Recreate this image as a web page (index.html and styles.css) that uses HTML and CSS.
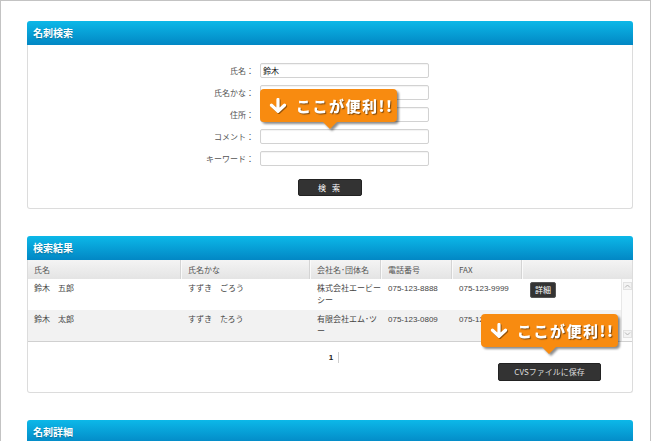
FILE: index.html
```html
<!DOCTYPE html>
<html lang="ja">
<head>
<meta charset="utf-8">
<title>名刺検索</title>
<link rel="stylesheet" href="styles.css">
</head>
<body>
<div class="frame">
  <section class="panel">
    <h2 class="panel-head">名刺検索</h2>
    <div class="panel-body search-body">
      <form class="search-form">
        <label class="field-label">氏名：</label><input class="field" type="text" value="鈴木">
        <label class="field-label">氏名かな：</label><input class="field" type="text">
        <label class="field-label">住所：</label><input class="field" type="text">
        <label class="field-label">コメント：</label><input class="field" type="text">
        <label class="field-label">キーワード：</label><input class="field" type="text">
      </form>
      <button class="btn btn-search" type="button">検 索</button>
    </div>
    <div class="callout callout-search">
      <svg class="callout-icon" viewBox="0 0 18 15" width="18" height="15"><path d="M9 1.5V13M2.5 7.2L9 13.2L15.5 7.2" stroke="#fff" stroke-width="3.2" fill="none" stroke-linecap="round" stroke-linejoin="round"/></svg>
      <span class="callout-text">ここが便利!!</span>
    </div>
  </section>

  <section class="panel">
    <h2 class="panel-head">検索結果</h2>
    <div class="panel-body results-body">
      <div class="thead cols">
        <div class="th">氏名</div>
        <div class="th">氏名かな</div>
        <div class="th">会社名･団体名</div>
        <div class="th">電話番号</div>
        <div class="th">FAX</div>
        <div class="th th-last"></div>
      </div>
      <div class="tbody-wrap">
        <div class="tbody">
          <div class="tr cols">
            <div class="td">鈴木　五郎</div>
            <div class="td">すずき　ごろう</div>
            <div class="td">株式会社エービーシー</div>
            <div class="td">075-123-8888</div>
            <div class="td">075-123-9999</div>
            <div class="td"><span class="btn btn-detail">詳細</span></div>
          </div>
          <div class="tr tr-alt cols">
            <div class="td">鈴木　太郎</div>
            <div class="td">すずき　たろう</div>
            <div class="td">有限会社エム･ツー</div>
            <div class="td">075-123-0809</div>
            <div class="td">075-123-0810</div>
            <div class="td"></div>
          </div>
        </div>
        <div class="vscroll">
          <span class="vscroll-btn"><svg viewBox="0 0 7 4" width="7" height="4"><path d="M1 3.5L3.5 1L6 3.5" stroke="#b5b5b5" fill="none"/></svg></span>
          <span class="vscroll-btn"><svg viewBox="0 0 7 4" width="7" height="4"><path d="M1 0.5L3.5 3L6 0.5" stroke="#b5b5b5" fill="none"/></svg></span>
        </div>
      </div>
      <div class="pager"><span class="page-num">1</span></div>
      <div class="csv-row"><button class="btn btn-csv" type="button">CVSファイルに保存</button></div>
    </div>
    <div class="callout callout-results">
      <svg class="callout-icon" viewBox="0 0 18 15" width="18" height="15"><path d="M9 1.5V13M2.5 7.2L9 13.2L15.5 7.2" stroke="#fff" stroke-width="3.2" fill="none" stroke-linecap="round" stroke-linejoin="round"/></svg>
      <span class="callout-text">ここが便利!!</span>
    </div>
  </section>

  <section class="panel">
    <h2 class="panel-head">名刺詳細</h2>
    <div class="panel-body detail-body"></div>
  </section>
</div>
</body>
</html>
```

FILE: styles.css
```css
* {
  box-sizing: border-box;
  margin: 0;
  padding: 0;
}

html, body {
  height: 100%;
  overflow: hidden;
  background: #fff;
}

body {
  font-family: "Liberation Sans", "Noto Sans CJK JP", sans-serif;
  font-size: 8px;
  color: #444;
}

.frame {
  width: 651px;
  min-height: 441px;
  border: 1px solid #c3c3c3;
  border-bottom: 0;
  padding: 20px 17px 0 26px;
}

.panel {
  position: relative;
  margin-bottom: 27px;
}

.panel-head {
  height: 24px;
  line-height: 24px;
  padding-left: 6px;
  font-family: "Noto Sans CJK JP", sans-serif;
  font-size: 10px;
  font-weight: bold;
  color: #fff;
  text-shadow: 0 1px 1px rgba(0, 0, 0, 0.25);
  background: linear-gradient(#0cb8e8, #0287c4);
  border-radius: 3px 3px 0 0;
}

.panel-body {
  border: 1px solid #dcdcdc;
  border-top: 0;
  border-radius: 0 0 3px 3px;
}

/* search form */
.search-body {
  padding: 18px 0 12px;
}

.search-form {
  display: grid;
  grid-template-columns: 226px 169px;
  column-gap: 6px;
  row-gap: 7px;
  align-items: center;
}

.field-label {
  text-align: right;
  color: #555;
  font-family: "Noto Sans CJK JP", sans-serif;
  line-height: 15px;
}

.field {
  height: 15px;
  border: 1px solid #d2d2d2;
  border-radius: 2px;
  box-shadow: inset 0 1px 1px rgba(0, 0, 0, 0.05);
  padding: 0 2px;
  font-family: "Noto Sans CJK JP", sans-serif;
  font-size: 8px;
  color: #111;
  outline: none;
}

.btn {
  display: inline-block;
  font-family: "Noto Sans CJK JP", sans-serif;
  font-size: 8px;
  color: #fff;
  background: #333;
  border: 1px solid #222;
  border-radius: 2px;
  text-align: center;
}

.btn-search {
  display: block;
  width: 64px;
  height: 17px;
  margin: 13px auto 0;
  letter-spacing: 2px;
  line-height: 15px;
}

/* results */
.cols {
  display: grid;
  grid-template-columns: 153px 129px 71px 71px 70px 1fr;
}

.thead {
  height: 19px;
  background: linear-gradient(#f4f4f4, #e4e4e4);
  font-family: "Noto Sans CJK JP", sans-serif;
  color: #555;
}

.th {
  line-height: 19px;
  padding-left: 7px;
  border-right: 1px solid #d4d4d4;
  box-shadow: 1px 0 0 #fafafa;
}

.th:first-child {
  padding-left: 6px;
}

.th-last {
  border-right: 0;
  box-shadow: none;
}

.tbody-wrap {
  display: flex;
  border-bottom: 1px solid #d0d0d0;
}

.tbody {
  width: 593px;
}

.tr {
  height: 31px;
  padding-top: 4px;
  line-height: 12px;
}

.tr-alt {
  background: #f2f2f2;
}

.td {
  padding-left: 7px;
  line-break: loose;
  color: #444;
}

.td:first-child {
  padding-left: 6px;
}

.btn-detail {
  width: 26px;
  height: 16px;
  line-height: 14px;
  margin: -1px 0 0 1px;
  vertical-align: top;
  border-color: #555;
}

.vscroll {
  flex: 1;
  display: flex;
  flex-direction: column;
  justify-content: space-between;
  align-items: center;
  padding: 3px 0 3px;
  background: #fbfbfb;
  border-left: 1px solid #e8e8e8;
}

.vscroll-btn {
  display: flex;
  align-items: center;
  justify-content: center;
  width: 9px;
  height: 8px;
  background: #f3f3f3;
  border: 1px solid #e2e2e2;
}

.pager {
  display: flex;
  justify-content: center;
  margin-top: 10px;
  padding-left: 8px;
}

.page-num {
  font-weight: bold;
  color: #222;
  line-height: 11px;
  padding-right: 5px;
  border-right: 1px solid #cfcfcf;
}

.csv-row {
  display: flex;
  justify-content: flex-end;
  padding: 0 31px 11px 0;
}

.btn-csv {
  width: 103px;
  height: 18px;
  line-height: 16px;
  color: #ddd;
}

.detail-body {
  height: 40px;
}

/* callouts */
.callout {
  position: absolute;
  width: 137px;
  height: 33px;
  display: flex;
  align-items: center;
  gap: 9px;
  padding-left: 9px;
  background: #f88b10;
  border-radius: 4px;
  filter: drop-shadow(2px 2px 1px rgba(0, 0, 0, 0.45));
  z-index: 2;
}

.callout::after {
  content: "";
  position: absolute;
  top: 100%;
  left: 63px;
  border-left: 7px solid transparent;
  border-right: 7px solid transparent;
  border-top: 7px solid #f88b10;
}

.callout-search {
  left: 233px;
  top: 68px;
}

.callout-results {
  left: 454px;
  top: 78px;
}

.callout-results::after {
  left: 61px;
}

.callout-icon {
  display: block;
  filter: drop-shadow(1px 1px 0 rgba(0, 0, 0, 0.4));
}

.callout-text {
  font-family: "Noto Sans CJK JP", sans-serif;
  font-size: 15px;
  font-weight: 900;
  letter-spacing: 1.5px;
  color: #fff;
  text-shadow: 1px 1px 1px rgba(0, 0, 0, 0.5);
  line-height: 1;
}
```
